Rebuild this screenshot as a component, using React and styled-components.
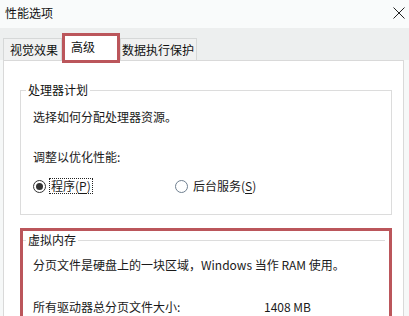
import React from 'react';
import styled, { createGlobalStyle } from 'styled-components';

const GlobalStyle = createGlobalStyle`
  html, body {
    margin: 0;
    padding: 0;
    background: #ffffff;
  }
  body {
    width: 409px;
    height: 316px;
    overflow: hidden;
    font-family: "Noto Sans CJK SC", "Noto Sans", "Liberation Sans", sans-serif;
    font-size: 12px;
    color: #1a1a1a;
  }
`;

const Window = styled.div`
  width: 409px;
  height: 316px;
  display: flex;
  flex-direction: column;
  background: #f6f8f8;
`;

const TitleBar = styled.div`
  height: 28px;
  flex: none;
  display: flex;
  align-items: center;
  justify-content: space-between;
  padding: 0 4px 2px 5px;
  box-sizing: border-box;
  background: #f9fbfb;
`;

const Title = styled.span`
  font-size: 12px;
  line-height: 18px;
  color: #111;
`;

const TabStrip = styled.div`
  height: 32px;
  flex: none;
  display: flex;
  align-items: flex-end;
  padding-left: 3px;
  background: #edefef;
  position: relative;
  z-index: 1;
`;

const Tab = styled.div`
  height: ${({ $active }) => ($active ? '30px' : '22px')};
  box-sizing: border-box;
  display: flex;
  align-items: center;
  padding: ${({ $pad }) => $pad};
  line-height: 18px;
  font-size: 12px;
  background: ${({ $active }) => ($active ? '#ffffff' : '#f0f1f1')};
  border: ${({ $active }) => ($active ? '3px solid #bb565b' : '1px solid #d6d8d8')};
  border-bottom: ${({ $active }) => ($active ? '3px solid #bb565b' : 'none')};
  margin-bottom: ${({ $active }) => ($active ? '-3px' : '0')};
  width: ${({ $width }) => $width || 'auto'};
  color: #111;
`;

const Panel = styled.div`
  flex: 1;
  margin: 0 5px 0 3px;
  background: #ffffff;
  border: 1px solid #d9d9d9;
  border-bottom: none;
  padding: 20px 11px 0 16px;
  display: flex;
  flex-direction: column;
`;

const Group = styled.fieldset`
  margin: 0;
  padding: ${({ $pad }) => $pad};
  border: 1px solid #dcdcdc;
  display: flex;
  flex-direction: column;
  min-width: 0;
`;

const Legend = styled.legend`
  padding: 0 2px;
  margin-left: -7px;
  font-size: 12px;
  line-height: 18px;
  color: #111;
`;

const Line = styled.div`
  line-height: 18px;
  margin-top: ${({ $gap }) => $gap || 0}px;
  white-space: nowrap;
`;

const RadioRow = styled.div`
  display: flex;
  align-items: center;
  margin-top: 11px;
  height: 18px;
`;

const RadioItem = styled.label`
  display: flex;
  align-items: center;
  width: ${({ $width }) => $width};
`;

const RadioCircle = styled.span`
  width: 13px;
  height: 13px;
  box-sizing: border-box;
  border-radius: 50%;
  border: 1px solid ${({ $checked }) => ($checked ? '#333333' : '#6f7f90')};
  background: #ffffff;
  display: flex;
  align-items: center;
  justify-content: center;
  margin-right: 3px;
  &::after {
    content: '';
    width: 7px;
    height: 7px;
    border-radius: 50%;
    background: #333333;
    display: ${({ $checked }) => ($checked ? 'block' : 'none')};
  }
`;

const RadioText = styled.span`
  line-height: 14px;
  padding: 0 1px;
  border: 1px dotted ${({ $focus }) => ($focus ? '#222' : 'transparent')};
`;

const Key = styled.u`
  text-decoration: underline;
  text-underline-offset: 2px;
`;

const RedFrame = styled.div`
  margin-top: 13px;
  border: 3px solid #bb565b;
  border-bottom: none;
  flex: 1;
  display: flex;
  flex-direction: column;
`;

const MemGroup = styled.fieldset`
  margin: 0 4px 0 0;
  padding: 7px 0 0 10px;
  border: none;
  border-top: 1px solid #dcdcdc;
  min-width: 0;
`;

const SizeRow = styled.div`
  display: grid;
  grid-template-columns: 231px auto;
  line-height: 18px;
  margin-top: 24px;
  white-space: nowrap;
`;

const CloseIcon = () => (
  <svg width="12" height="12" viewBox="0 0 12 12">
    <path d="M0.5 0.5 L11.5 11.5 M11.5 0.5 L0.5 11.5" stroke="#222" strokeWidth="1" fill="none" />
  </svg>
);

const App = () => {
  return (
    <>
      <GlobalStyle />
      <Window>
        <TitleBar>
          <Title>性能选项</Title>
          <CloseIcon />
        </TitleBar>
        <TabStrip>
          <Tab $pad="0 3px 0 6px" $width="59px">视觉效果</Tab>
          <Tab $active $pad="0 0 2px 6px" $width="58px">高级</Tab>
          <Tab $pad="0 2px 0 1px">数据执行保护</Tab>
        </TabStrip>
        <Panel>
          <Group $pad="9px 0 19px 12px">
            <Legend>处理器计划</Legend>
            <Line>选择如何分配处理器资源。</Line>
            <Line $gap={22}>调整以优化性能:</Line>
            <RadioRow>
              <RadioItem $width="142px">
                <RadioCircle $checked />
                <RadioText $focus>
                  程序(<Key>P</Key>)
                </RadioText>
              </RadioItem>
              <RadioItem>
                <RadioCircle />
                <RadioText>
                  后台服务(<Key>S</Key>)
                </RadioText>
              </RadioItem>
            </RadioRow>
          </Group>
          <RedFrame>
            <MemGroup>
              <Legend>虚拟内存</Legend>
              <Line>分页文件是硬盘上的一块区域，Windows 当作 RAM 使用。</Line>
              <SizeRow>
                <span>所有驱动器总分页文件大小:</span>
                <span>1408 MB</span>
              </SizeRow>
            </MemGroup>
          </RedFrame>
        </Panel>
      </Window>
    </>
  );
};

export default App;
